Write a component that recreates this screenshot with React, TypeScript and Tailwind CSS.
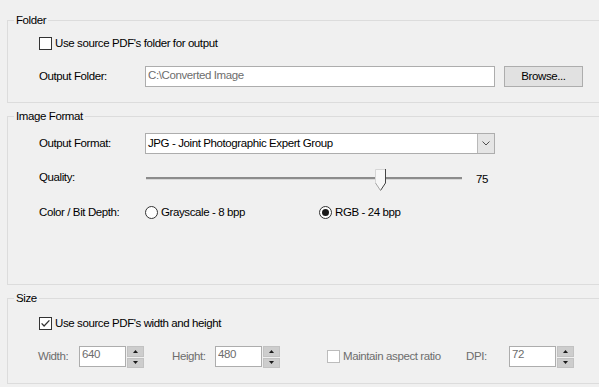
import * as React from 'react';
import clsx from 'clsx';

// Export options dialog: Folder / Image Format / Size group boxes

function Group({
  title,
  className,
  children,
}: {
  title: string;
  className?: string;
  children?: React.ReactNode;
}) {
  return (
    <fieldset className={clsx('ml-[7px] mr-[-20px] min-w-0 border border-[#dcdcdc]', className)}>
      <legend className="ml-[6px] px-[2px] leading-[13px]">{title}</legend>
      {children}
    </fieldset>
  );
}

function CheckBox({ checked, disabled }: { checked?: boolean; disabled?: boolean }) {
  return (
    <span
      className={clsx(
        'flex h-[13px] w-[13px] shrink-0 items-center justify-center border bg-white',
        disabled ? 'border-[#bcbcbc]' : 'border-[#333333]'
      )}
    >
      {checked && (
        <svg width="11" height="11" viewBox="0 0 11 11">
          <path d="M1.6 5.4 L4.1 8 L9.4 2.4" fill="none" stroke="#333333" strokeWidth="1.3" />
        </svg>
      )}
    </span>
  );
}

function Radio({ checked }: { checked?: boolean }) {
  return (
    <span className="flex h-[13px] w-[13px] shrink-0 items-center justify-center rounded-full border border-[#333333] bg-white">
      {checked && <span className="h-[7px] w-[7px] rounded-full bg-[#1a1a1a]" />}
    </span>
  );
}

const SpinArrow = ({ up }: { up?: boolean }) => (
  <svg width="5" height="3" viewBox="0 0 5 3">
    <path d={up ? 'M0 3 L2.5 0 L5 3 Z' : 'M0 0 L5 0 L2.5 3 Z'} fill="#1a1a1a" />
  </svg>
);

function Spinner() {
  return (
    <div className="ml-[1px] flex h-[22px] w-[17px] flex-col gap-[1px]">
      <div className="flex h-[11px] items-center justify-center border border-[#c2c2c2] bg-[#cdcdcd]">
        <SpinArrow up />
      </div>
      <div className="flex h-[10px] items-center justify-center border border-[#c2c2c2] bg-[#cdcdcd]">
        <SpinArrow />
      </div>
    </div>
  );
}

function SpinField({ value }: { value: string }) {
  return (
    <>
      <input
        readOnly
        disabled
        value={value}
        className="h-[21px] w-[47px] border border-[#adadad] bg-white px-[2px] pb-[6px] pt-0 text-[#6d6d6d] outline-none"
      />
      <Spinner />
    </>
  );
}

function Slider({ value }: { value: number }) {
  const trackWidth = 316;
  const thumbWidth = 11;
  const left = Math.round((value / 100) * (trackWidth - thumbWidth));
  return (
    <div className="relative ml-[1px] h-[22px] w-[316px]">
      <div className="mt-[8px] h-[3px] border-b border-[#d8d8d8] bg-[#8c8c8c]" />
      <svg
        className="absolute top-0"
        style={{ left }}
        width="11"
        height="23"
        viewBox="0 0 11 23"
      >
        <path d="M0.5 0.5 H10.5 V14 L5.5 21.5 L0.5 14 Z" fill="#f7f7f7" />
        <path d="M0.5 14 V0.5 H10" fill="none" stroke="#d6d6d6" />
        <path d="M10.5 0 V14 L5.5 21.5" fill="none" stroke="#444444" />
        <path d="M0.5 14 L5.5 21.5" fill="none" stroke="#a6a6a6" />
      </svg>
    </div>
  );
}

export default function App() {
  return (
    <div className="h-[387px] w-[599px] overflow-hidden bg-[#f0f0f0] pt-[14px] font-['Liberation_Sans',Arial,sans-serif] text-[11.5px] leading-[13px] tracking-[-0.4px] text-black">
      {/* Folder */}
      <Group title="Folder" className="h-[89px]">
        <div className="pl-[31px]">
          <label className="mt-[10px] flex h-[13px] items-center">
            <CheckBox />
            <span className="ml-[3px]">Use source PDF's folder for output</span>
          </label>
          <div className="mt-[16px] flex h-[21px] items-center">
            <span className="w-[106px]">Output Folder:</span>
            <input
              readOnly
              value="C:\Converted Image"
              className="h-[21px] w-[350px] border border-[#adadad] bg-white px-[2px] pb-[3px] pt-0 text-[#6d6d6d] outline-none"
            />
            <button className="ml-[9px] h-[21px] w-[79px] border border-[#adadad] bg-[#e1e1e1] pb-[1px]">
              Browse...
            </button>
          </div>
        </div>
      </Group>

      {/* Image Format */}
      <Group title="Image Format" className="mt-[7px] h-[175px]">
        <div className="pl-[31px]">
          <div className="mt-[10px] flex h-[21px] items-center">
            <span className="w-[106px]">Output Format:</span>
            <div className="flex h-[21px] w-[350px] items-center border border-[#adadad] bg-white">
              <span className="flex-1 pl-[2px]">JPG - Joint Photographic Expert Group</span>
              <div className="flex h-full w-[17px] items-center justify-center border-l border-[#b9b9b9] bg-[#e5e5e5]">
                <svg width="8" height="5" viewBox="0 0 8 5">
                  <path d="M0.5 0.5 L4 4 L7.5 0.5" fill="none" stroke="#505050" strokeWidth="1" />
                </svg>
              </div>
            </div>
          </div>
          <div className="mt-[15px] flex h-[22px] items-start">
            <span className="mt-[2px] w-[106px]">Quality:</span>
            <Slider value={75} />
            <span className="ml-[14px] mt-[4px]">75</span>
          </div>
          <div className="mt-[15px] flex h-[13px] items-center">
            <span className="w-[106px]">Color / Bit Depth:</span>
            <label className="flex w-[174px] items-center">
              <Radio />
              <span className="ml-[3px]">Grayscale - 8 bpp</span>
            </label>
            <label className="flex items-center">
              <Radio checked />
              <span className="ml-[3px]">RGB - 24 bpp</span>
            </label>
          </div>
        </div>
      </Group>

      {/* Size */}
      <Group title="Size" className="mt-[7px] h-[92px]">
        <label className="ml-[31px] mt-[12px] flex h-[13px] items-center">
          <CheckBox checked />
          <span className="ml-[3px]">Use source PDF's width and height</span>
        </label>
        <div className="mt-[16px] flex h-[21px] items-center pl-[30px] text-[#6d6d6d]">
          <span className="w-[41px]">Width:</span>
          <SpinField value="640" />
          <span className="ml-[28px] w-[43px]">Height:</span>
          <SpinField value="480" />
          <label className="ml-[47px] flex w-[139px] items-center">
            <CheckBox disabled />
            <span className="ml-[3px]">Maintain aspect ratio</span>
          </label>
          <span className="w-[43px]">DPI:</span>
          <SpinField value="72" />
        </div>
      </Group>
    </div>
  );
}
